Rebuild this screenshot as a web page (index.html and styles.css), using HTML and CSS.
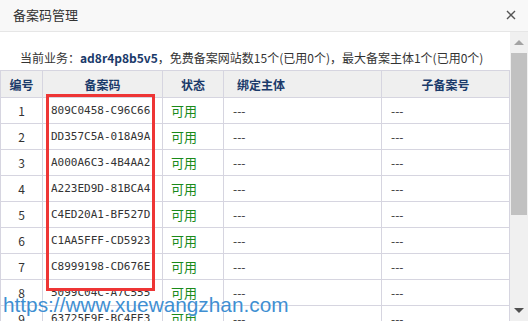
FILE: index.html
```html
<!DOCTYPE html>
<html lang="zh">
<head>
<meta charset="utf-8">
<link rel="stylesheet" href="styles.css">
</head>
<body>
<div class="dialog">
  <div class="titlebar">
    <span class="title">备案码管理</span>
    <svg class="close" width="10" height="10" viewBox="0 0 10 10"><path d="M1 1L9 9M9 1L1 9" stroke="#555" stroke-width="1.4"/></svg>
  </div>
  <div class="body">
    <div class="main">
      <div class="info">当前业务：<b>ad8r4p8b5v5</b>，免费备案网站数15个(已用0个)，最大备案主体1个(已用0个)</div>
      <table class="grid">
        <thead>
          <tr><th class="c-no">编号</th><th class="c-code">备案码</th><th class="c-st">状态</th><th class="c-bind left">绑定主体</th><th class="c-sub">子备案号</th></tr>
        </thead>
        <tbody>
          <tr><td class="num">1</td><td class="code">809C0458-C96C66</td><td class="ok">可用</td><td>---</td><td>---</td></tr>
          <tr><td class="num">2</td><td class="code">DD357C5A-018A9A</td><td class="ok">可用</td><td>---</td><td>---</td></tr>
          <tr><td class="num">3</td><td class="code">A000A6C3-4B4AA2</td><td class="ok">可用</td><td>---</td><td>---</td></tr>
          <tr><td class="num">4</td><td class="code">A223ED9D-81BCA4</td><td class="ok">可用</td><td>---</td><td>---</td></tr>
          <tr><td class="num">5</td><td class="code">C4ED20A1-BF527D</td><td class="ok">可用</td><td>---</td><td>---</td></tr>
          <tr><td class="num">6</td><td class="code">C1AA5FFF-CD5923</td><td class="ok">可用</td><td>---</td><td>---</td></tr>
          <tr><td class="num">7</td><td class="code">C8999198-CD676E</td><td class="ok">可用</td><td>---</td><td>---</td></tr>
          <tr><td class="num">8</td><td class="code">5099C04C-A7C555</td><td class="ok">可用</td><td>---</td><td>---</td></tr>
          <tr><td class="num">9</td><td class="code">63725E9F-BC4EE3</td><td class="ok">可用</td><td>---</td><td>---</td></tr>
        </tbody>
      </table>
      <div class="mark"></div>
      <div class="watermark">https://www.xuewangzhan.com</div>
    </div>
    <div class="scrollbar">
      <div class="arrow up"></div>
      <div class="thumb"></div>
      <div class="track"></div>
      <div class="arrow down"></div>
    </div>
  </div>
</div>
</body>
</html>
```
FILE: styles.css
```css
html, body {
  margin: 0;
  padding: 0;
  background: #fff;
}
body {
  width: 528px;
  height: 321px;
  overflow: hidden;
  font-family: "Noto Sans CJK SC", "Noto Sans", sans-serif;
  font-size: 12px;
  color: #333;
}
.dialog {
  display: flex;
  flex-direction: column;
  height: 321px;
}
.titlebar {
  height: 31px;
  background: #f8f8f8;
  border-bottom: 1px solid #e6e6e6;
  display: flex;
  align-items: center;
  justify-content: space-between;
  padding: 0 12px 0 13px;
  flex: none;
}
.title {
  font-size: 13px;
  color: #333;
  line-height: 1;
  margin-top: -3px;
}
.close {
  display: block;
  margin-top: -1px;
}
.body {
  flex: 1;
  display: flex;
  min-height: 0;
}
.main {
  position: relative;
  width: 510px;
  padding-top: 16px;
  overflow: hidden;
}
.info {
  height: 20px;
  line-height: 20px;
  padding-left: 20px;
  margin-bottom: 2px;
  color: #333;
  white-space: nowrap;
}
.info b {
  color: #1a3a6a;
  font-weight: bold;
}
.grid {
  border-collapse: collapse;
  width: 510px;
  table-layout: fixed;
}
.grid th, .grid td {
  border: 1px solid #d6d5e0;
  padding: 0 0 0 9px;
  text-align: left;
  white-space: nowrap;
  overflow: hidden;
}
.grid th {
  height: 26px;
  background: #efefef;
  color: #1a3a6a;
  font-weight: bold;
  text-align: center;
  padding: 0;
}
.grid th.left {
  text-align: left;
  padding-left: 13px;
}
.grid td {
  height: 25px;
}
.c-no { width: 41px; }
.c-code { width: 119px; }
.c-st { width: 60px; }
.c-bind { width: 144px; }
.grid td.num {
  text-align: center;
  padding: 0;
}
.grid td.code {
  font-family: "DejaVu Sans Mono", monospace;
  font-size: 11px;
  padding-left: 8px;
  color: #333;
}
.grid td.ok {
  color: #1a8a1a;
  font-size: 13px;
  padding-left: 8px;
}
.mark {
  position: absolute;
  left: 46px;
  top: 62px;
  width: 103px;
  height: 191px;
  border: 3px solid #ee3535;
}
.watermark {
  position: absolute;
  left: 3px;
  top: 261px;
  font-family: "Liberation Sans", Arial, sans-serif;
  font-size: 20.8px;
  color: #3f8fd2;
  white-space: nowrap;
  text-shadow: 0 0 2px #fff;
}
.scrollbar {
  width: 18px;
  background: #f0f0f0;
  display: flex;
  flex-direction: column;
}
.arrow {
  height: 21px;
  display: flex;
  align-items: center;
  justify-content: center;
  flex: none;
}
.arrow.up::before {
  content: "";
  border-left: 5px solid transparent;
  border-right: 5px solid transparent;
  border-bottom: 5px solid #a3a3a3;
}
.arrow.down::before {
  content: "";
  border-left: 5px solid transparent;
  border-right: 5px solid transparent;
  border-top: 5px solid #505050;
}
.thumb {
  height: 162px;
  margin: 0 1px;
  background: #c1c1c1;
  flex: none;
}
.track {
  flex: 1;
}
```
